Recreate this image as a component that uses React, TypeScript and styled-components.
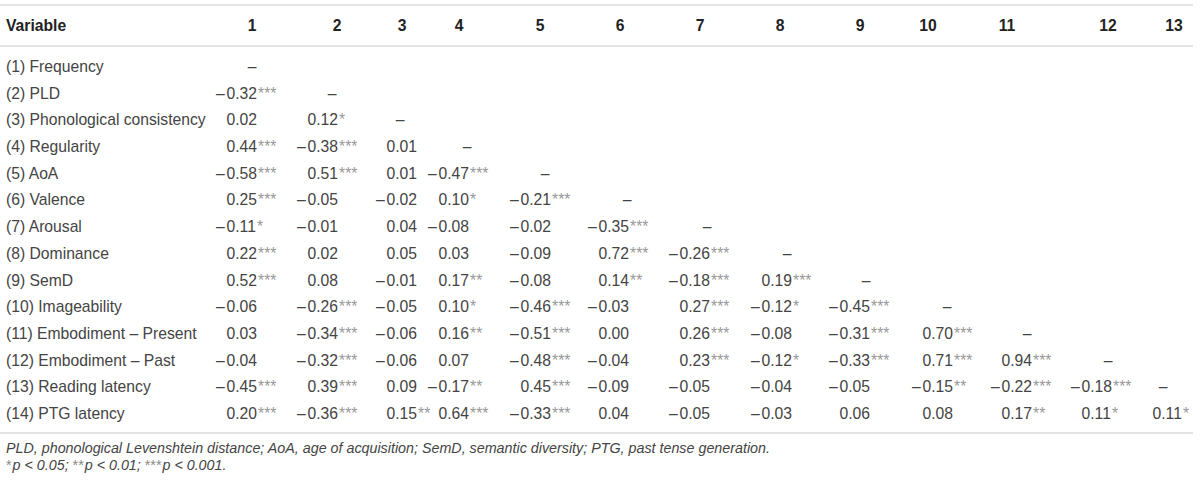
import React from 'react';
import styled, { createGlobalStyle } from 'styled-components';

const GlobalStyle = createGlobalStyle`
	body {
		margin: 0;
		background: #fff;
		font-family: 'Liberation Sans', Arial, sans-serif;
	}
`;

type Column = { w: number; head: number; dash: number };

// width of each numeric column, and where the header label / diagonal dash are centred inside it
const COLUMNS: Column[] = [
	{ w: 81, head: 36, dash: 36 },
	{ w: 79, head: 40, dash: 35 },
	{ w: 52, head: 26, dash: 24 },
	{ w: 82, head: 31, dash: 39 },
	{ w: 78, head: 30, dash: 35 },
	{ w: 81, head: 32, dash: 39 },
	{ w: 82, head: 31, dash: 38 },
	{ w: 78, head: 29, dash: 36 },
	{ w: 83, head: 31, dash: 37 },
	{ w: 79, head: 16, dash: 35 },
	{ w: 80, head: 16, dash: 36 },
	{ w: 71, head: 37, dash: 37 },
	{ w: 51, head: 32, dash: 21 },
];

const TEMPLATE = `216px ${COLUMNS.map((c) => `${c.w}px`).join(' ')}`;

const ROWS: { label: string; values: string[] }[] = [
	{ label: '(1) Frequency', values: [] },
	{ label: '(2) PLD', values: ['–0.32***'] },
	{ label: '(3) Phonological consistency', values: ['0.02', '0.12*'] },
	{ label: '(4) Regularity', values: ['0.44***', '–0.38***', '0.01'] },
	{ label: '(5) AoA', values: ['–0.58***', '0.51***', '0.01', '–0.47***'] },
	{ label: '(6) Valence', values: ['0.25***', '–0.05', '–0.02', '0.10*', '–0.21***'] },
	{ label: '(7) Arousal', values: ['–0.11*', '–0.01', '0.04', '–0.08', '–0.02', '–0.35***'] },
	{
		label: '(8) Dominance',
		values: ['0.22***', '0.02', '0.05', '0.03', '–0.09', '0.72***', '–0.26***'],
	},
	{
		label: '(9) SemD',
		values: ['0.52***', '0.08', '–0.01', '0.17**', '–0.08', '0.14**', '–0.18***', '0.19***'],
	},
	{
		label: '(10) Imageability',
		values: ['–0.06', '–0.26***', '–0.05', '0.10*', '–0.46***', '–0.03', '0.27***', '–0.12*', '–0.45***'],
	},
	{
		label: '(11) Embodiment – Present',
		values: ['0.03', '–0.34***', '–0.06', '0.16**', '–0.51***', '0.00', '0.26***', '–0.08', '–0.31***', '0.70***'],
	},
	{
		label: '(12) Embodiment – Past',
		values: ['–0.04', '–0.32***', '–0.06', '0.07', '–0.48***', '–0.04', '0.23***', '–0.12*', '–0.33***', '0.71***', '0.94***'],
	},
	{
		label: '(13) Reading latency',
		values: ['–0.45***', '0.39***', '0.09', '–0.17**', '0.45***', '–0.09', '–0.05', '–0.04', '–0.05', '–0.15**', '–0.22***', '–0.18***'],
	},
	{
		label: '(14) PTG latency',
		values: ['0.20***', '–0.36***', '0.15**', '0.64***', '–0.33***', '0.04', '–0.05', '–0.03', '0.06', '0.08', '0.17**', '0.11*', '0.11*'],
	},
];

const Table = styled.div`
	width: 1193px;
	margin-top: 4px;
	border-top: 2px solid #e4e4e4;
	color: #444;
`;

const Row = styled.div`
	display: grid;
	grid-template-columns: ${TEMPLATE};
	align-items: center;
	height: 26.7px;
	font-size: 15.7px;
`;

const HeadRow = styled(Row)`
	height: 39px;
	border-bottom: 2px solid #e4e4e4;
	font-weight: bold;
	color: #222;
`;

const Body = styled.div`
	padding: 6.7px 0 4.5px;
	border-bottom: 2px solid #e4e4e4;
`;

const LabelCell = styled.div`
	padding-left: 6px;
	white-space: nowrap;
`;

const Centered = styled.div<{ $at: number }>`
	width: ${(p) => p.$at * 2}px;
	text-align: center;
	white-space: nowrap;
`;

const ValueCell = styled.div`
	display: flex;
	align-items: baseline;
	white-space: nowrap;
`;

const Sign = styled.span`
	width: 10.5px;
	flex: none;
`;

const Stars = styled.span`
	color: #999;
	margin-left: 1px;
`;

const Notes = styled.div`
	padding: 6.5px 0 0 6px;
	font-size: 14.3px;
	font-style: italic;
	line-height: 17px;
	color: #444;
`;

const NoteStars = styled.span`
	font-style: normal;
	color: #888;
	margin-right: 1px;
`;

function Value({ text }: { text: string }): React.ReactElement {
	const negative = text.startsWith('–');
	const body = negative ? text.slice(1) : text;
	const starAt = body.indexOf('*');
	const digits = starAt === -1 ? body : body.slice(0, starAt);
	const stars = starAt === -1 ? '' : body.slice(starAt);

	return (
		<ValueCell>
			<Sign>{negative ? '–' : ''}</Sign>
			<span>{digits}</span>
			{stars ? <Stars>{stars}</Stars> : null}
		</ValueCell>
	);
}

export default function App(): React.ReactElement {
	return (
		<>
			<GlobalStyle />
			<Table>
				<HeadRow>
					<LabelCell>Variable</LabelCell>
					{COLUMNS.map((c, i) => (
						<Centered key={i} $at={c.head}>
							{i + 1}
						</Centered>
					))}
				</HeadRow>
				<Body>
					{ROWS.map((row, r) => (
						<Row key={row.label}>
							<LabelCell>{row.label}</LabelCell>
							{row.values.map((v, i) => (
								<Value key={i} text={v} />
							))}
							{r < COLUMNS.length ? <Centered $at={COLUMNS[r].dash}>–</Centered> : null}
						</Row>
					))}
				</Body>
			</Table>
			<Notes>
				<div>
					PLD, phonological Levenshtein distance; AoA, age of acquisition; SemD, semantic diversity; PTG, past
					tense generation.
				</div>
				<div>
					<NoteStars>*</NoteStars>p &lt; 0.05; <NoteStars>**</NoteStars>p &lt; 0.01; <NoteStars>***</NoteStars>p
					&lt; 0.001.
				</div>
			</Notes>
		</>
	);
}
